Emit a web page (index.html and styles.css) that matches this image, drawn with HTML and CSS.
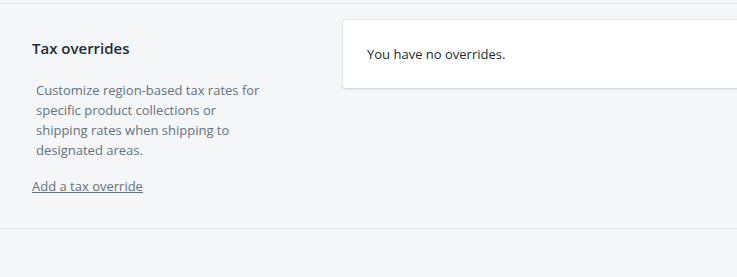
FILE: index.html
```html
<!DOCTYPE html>
<html lang="en">

<head>
    <meta charset="UTF-8">
    <meta name="viewport" content="width=device-width, initial-scale=1.0">
    <title>Tax overrides</title>
    <link rel="stylesheet" href="styles.css">
</head>

<body>
    <div class="page">
        <section class="layout-section">
            <div class="annotation">
                <h2 class="annotation-title">Tax overrides</h2>
                <p class="annotation-text">Customize region-based tax rates for specific product collections or
                    shipping rates when shipping to designated areas.</p>
                <a href="#" class="annotation-link">Add a tax override</a>
            </div>
            <div class="card">
                <p class="card-text">You have no overrides.</p>
            </div>
        </section>
    </div>
</body>

</html>
```

FILE: styles.css
```css
body {
    margin: 0;
    padding: 0;
    font-family: "Open Sans", "Noto Sans", sans-serif;
    background-color: #f4f6f8;
    color: #212b36;
}

.page {
    padding-top: 3px;
}

.layout-section {
    display: flex;
    align-items: flex-start;
    border-top: 1px solid #dfe3e8;
    border-bottom: 1px solid #dfe3e8;
    padding: 16px 0 32px 32px;
}

.annotation {
    width: 236px;
    flex-shrink: 0;
    margin-right: 75px;
    padding-top: 16px;
}

.annotation-title {
    margin: 0;
    font-size: 15px;
    line-height: 24px;
    font-weight: 600;
    color: #212b36;
}

.annotation-text {
    margin: 20px 0 0 0;
    padding-left: 4px;
    font-size: 13px;
    line-height: 20px;
    color: #637381;
}

.annotation-link {
    display: inline-block;
    margin-top: 16px;
    font-size: 13px;
    line-height: 20px;
    color: #637381;
    text-decoration: underline;
}

.card {
    flex-grow: 1;
    background-color: #fff;
    border-radius: 3px 0 0 3px;
    box-shadow: 0 0 0 1px rgba(63, 63, 68, 0.05), 0 1px 3px 0 rgba(63, 63, 68, 0.15);
    padding: 24px;
    margin-right: -24px;
}

.card-text {
    margin: 0;
    font-size: 13px;
    line-height: 20px;
    color: #212b36;
}
```
